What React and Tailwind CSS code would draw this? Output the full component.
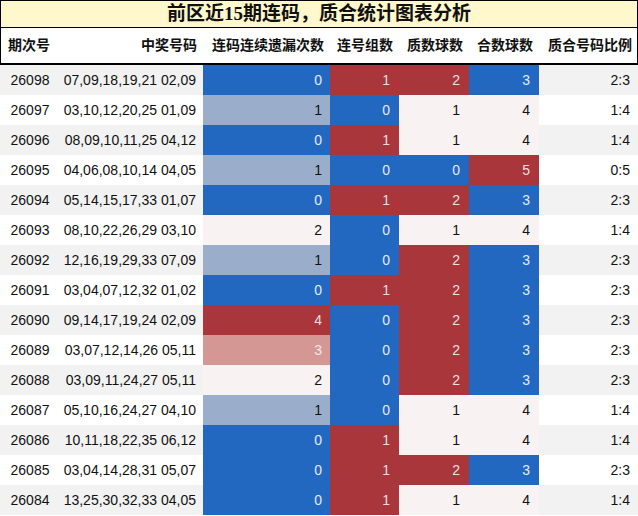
import React from 'react';

const rows = [
  ['26098', '07,09,18,19,21 02,09', 0, 1, 2, 3, '2:3'],
  ['26097', '03,10,12,20,25 01,09', 1, 0, 1, 4, '1:4'],
  ['26096', '08,09,10,11,25 04,12', 0, 1, 1, 4, '1:4'],
  ['26095', '04,06,08,10,14 04,05', 1, 0, 0, 5, '0:5'],
  ['26094', '05,14,15,17,33 01,07', 0, 1, 2, 3, '2:3'],
  ['26093', '08,10,22,26,29 03,10', 2, 0, 1, 4, '1:4'],
  ['26092', '12,16,19,29,33 07,09', 1, 0, 2, 3, '2:3'],
  ['26091', '03,04,07,12,32 01,02', 0, 1, 2, 3, '2:3'],
  ['26090', '09,14,17,19,24 02,09', 4, 0, 2, 3, '2:3'],
  ['26089', '03,07,12,14,26 05,11', 3, 0, 2, 3, '2:3'],
  ['26088', '03,09,11,24,27 05,11', 2, 0, 2, 3, '2:3'],
  ['26087', '05,10,16,24,27 04,10', 1, 0, 1, 4, '1:4'],
  ['26086', '10,11,18,22,35 06,12', 0, 1, 1, 4, '1:4'],
  ['26085', '03,04,14,28,31 05,07', 0, 1, 2, 3, '2:3'],
  ['26084', '13,25,30,32,33 04,05', 0, 1, 1, 4, '1:4'],
];

const BLUE = 'bg-[#2368c0] text-[#e3eaf6]';
const RED = 'bg-[#a9363b] text-[#f3dede]';
const PALE = 'bg-[#f8f2f2] text-[#111]';

// colour scale for the miss-count column
const missCls = (v) => {
  if (v === 0) return BLUE;
  if (v === 1) return 'bg-[#9aaecb] text-[#111]';
  if (v === 2) return PALE;
  if (v === 3) return 'bg-[#d49794] text-[#f6e6e6]';
  return RED;
};
const groupCls = (v) => (v === 0 ? BLUE : RED);
const primeCls = (v) => (v === 0 ? BLUE : v === 1 ? PALE : RED);
const compCls = (v) => (v === 3 ? BLUE : v === 4 ? PALE : RED);

const cols = 'grid grid-cols-[60px_143px_127px_69px_70px_70px_99px]';
const font = { fontFamily: '"Liberation Sans", "Noto Sans CJK SC", sans-serif' };

export default function App() {
  return (
    <div className="w-[638px] h-[516px] bg-white overflow-hidden" style={font}>
      <div
        className="h-[28px] border border-black bg-[#fff8cc] flex items-center justify-center text-[19px] font-bold text-[#111]"
        style={{ fontFamily: '"Liberation Serif", "Noto Sans CJK SC", serif' }}
      >
        前区近15期连码，质合统计图表分析
      </div>
      <div className={`${cols} h-[37px] border-x border-black border-b-2 text-[14px] font-bold text-[#111] items-center`}>
        <div className="pl-[7px]">期次号</div>
        <div className="text-right pr-[7px]">中奖号码</div>
        <div className="text-right pr-[7px]">连码连续遗漏次数</div>
        <div className="text-right pr-[7px]">连号组数</div>
        <div className="text-right pr-[7px]">质数球数</div>
        <div className="text-right pr-[7px]">合数球数</div>
        <div className="text-right pr-[7px]">质合号码比例</div>
      </div>
      {rows.map((r, i) => {
        const stripe = i % 2 === 0 ? 'bg-[#f2f2f2]' : 'bg-white';
        return (
          <div key={r[0]} className={`${cols} h-[30px] text-[14px] text-[#111]`}>
            <div className={`${stripe} flex items-center justify-center`}>{r[0]}</div>
            <div className={`${stripe} flex items-center justify-end pr-[7px]`}>{r[1]}</div>
            <div className={`${missCls(r[2])} flex items-center justify-end pr-[8px]`}>{r[2]}</div>
            <div className={`${groupCls(r[3])} flex items-center justify-end pr-[9px]`}>{r[3]}</div>
            <div className={`${primeCls(r[4])} flex items-center justify-end pr-[9px]`}>{r[4]}</div>
            <div className={`${compCls(r[5])} flex items-center justify-end pr-[9px]`}>{r[5]}</div>
            <div className={`${stripe} flex items-center justify-end pr-[8px]`}>{r[6]}</div>
          </div>
        );
      })}
    </div>
  );
}
